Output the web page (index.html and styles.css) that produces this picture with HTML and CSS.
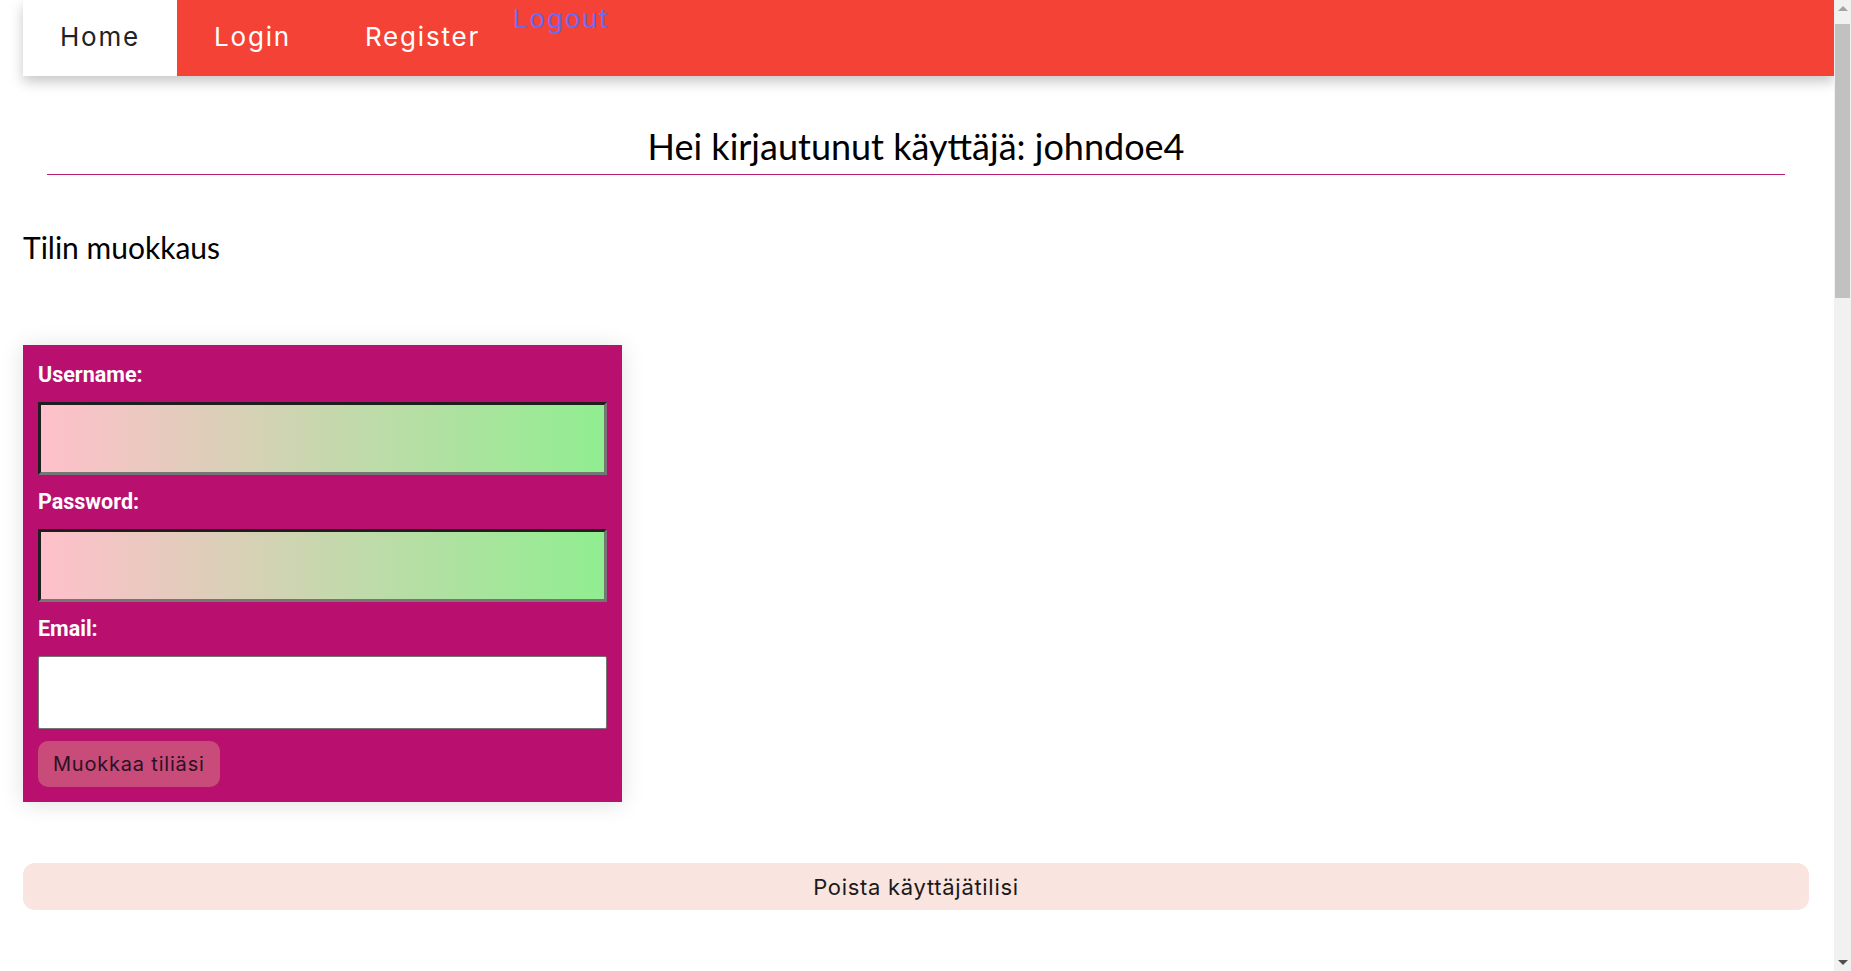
FILE: index.html
```html
<!DOCTYPE html>
<html lang="fi">
<head>
<meta charset="utf-8">
<title>Tilin muokkaus</title>
<link rel="stylesheet" href="styles.css">
</head>
<body>
<div class="page">
  <nav class="topnav">
    <a class="nav-link active" href="#">Home</a>
    <a class="nav-link" href="#">Login</a>
    <a class="nav-link" href="#">Register</a>
    <a class="logout" href="#">Logout</a>
  </nav>

  <main class="content">
    <h1 class="greeting">Hei kirjautunut käyttäjä: johndoe4</h1>
    <h2 class="section-title">Tilin muokkaus</h2>

    <form class="edit-card">
      <label class="field-label" for="username">Username:</label>
      <input class="field gradient" id="username" type="text">
      <label class="field-label" for="password">Password:</label>
      <input class="field gradient" id="password" type="password">
      <label class="field-label" for="email">Email:</label>
      <input class="field plain" id="email" type="email">
      <div class="actions">
        <button class="edit-btn" type="button">Muokkaa tiliäsi</button>
      </div>
    </form>

    <button class="delete-btn" type="button">Poista käyttäjätilisi</button>
  </main>
</div>

<div class="scrollbar" aria-hidden="true">
  <span class="sb-arrow up"></span>
  <span class="sb-thumb"></span>
  <span class="sb-arrow down"></span>
</div>
</body>
</html>
```

FILE: styles.css
```css
html, body {
  margin: 0;
  padding: 0;
  background: #ffffff;
}

.page {
  margin-right: 17px;
  font-family: "Inter", "DejaVu Sans", sans-serif;
}

/* decorative browser scrollbar (as in the reference) */
.scrollbar {
  position: fixed;
  top: 0;
  right: 0;
  bottom: 0;
  width: 17px;
  background: #f1f1f1;
  display: flex;
  flex-direction: column;
  align-items: center;
}

.sb-arrow {
  width: 0;
  height: 0;
  border-left: 5px solid transparent;
  border-right: 5px solid transparent;
}

.sb-arrow.up {
  margin-top: 6px;
  border-bottom: 5px solid #a3a3a3;
}

.sb-thumb {
  width: 15px;
  height: 274px;
  margin-top: 13px;
  background: #c1c1c1;
}

.sb-arrow.down {
  margin-top: auto;
  margin-bottom: 6px;
  border-top: 5px solid #505050;
}

.topnav {
  display: flex;
  align-items: flex-start;
  height: 76px;
  margin-left: 23px;
  background: #f44336;
  box-shadow: 0 6px 12px rgba(0, 0, 0, 0.22);
}

.nav-link {
  display: block;
  padding: 0 37px;
  height: 76px;
  line-height: 74px;
  font-size: 26px;
  letter-spacing: 1.8px;
  color: #ffffff;
  text-decoration: none;
}

.nav-link:nth-child(3) {
  padding-right: 33px;
}

.nav-link.active {
  background: #ffffff;
  color: #222222;
}

.logout {
  display: block;
  line-height: 38px;
  font-size: 26px;
  letter-spacing: 1.8px;
  color: #6a6af2;
  text-decoration: none;
}

.content {
  padding: 0 25px 0 23px;
}

.greeting {
  margin: 49px 24px 0 24px;
  padding-bottom: 6px;
  border-bottom: 1.5px solid #b81f75;
  font-family: "Lato", sans-serif;
  font-weight: 400;
  font-size: 36px;
  line-height: 43px;
  text-align: center;
  color: #000000;
}

.section-title {
  margin: 55px 0 0;
  font-family: "Lato", sans-serif;
  font-weight: 400;
  font-size: 30px;
  line-height: 34px;
  color: #000000;
}

.edit-card {
  display: flex;
  flex-direction: column;
  width: 569px;
  margin-top: 81px;
  padding: 17px 15px 15px;
  background: #b90f6f;
  box-shadow: 0 2px 22px rgba(0, 0, 0, 0.12);
}

.field-label {
  font-family: "Roboto", "Liberation Sans", sans-serif;
  font-weight: 700;
  font-size: 21.5px;
  line-height: 26px;
  color: #ffffff;
  margin-bottom: 14px;
}

.field {
  box-sizing: border-box;
  width: 100%;
  height: 73px;
  margin: 0 0 14px;
  font-size: 18px;
}

.field.gradient {
  background: linear-gradient(to right, #ffc0cb, #90ee90);
  border-width: 3px;
  border-style: solid;
  border-color: #1e1e1e #767676 #767676 #1e1e1e;
}

.field.plain {
  background: #ffffff;
  border: 1px solid #767676;
  border-radius: 2px;
  margin-bottom: 12px;
}

.actions {
  display: flex;
}

.edit-btn {
  height: 46px;
  padding: 0 15px;
  border: none;
  border-radius: 10px;
  background: #c84b7a;
  font-family: "Inter", "DejaVu Sans", sans-serif;
  font-size: 20px;
  letter-spacing: 0.8px;
  color: #2a1222;
}

.delete-btn {
  display: block;
  width: 100%;
  height: 47px;
  margin-top: 61px;
  border: none;
  border-radius: 12px;
  background: #f9e4e0;
  font-family: "Inter", "DejaVu Sans", sans-serif;
  font-size: 22px;
  letter-spacing: 0.7px;
  color: #1a1a1a;
}
```
